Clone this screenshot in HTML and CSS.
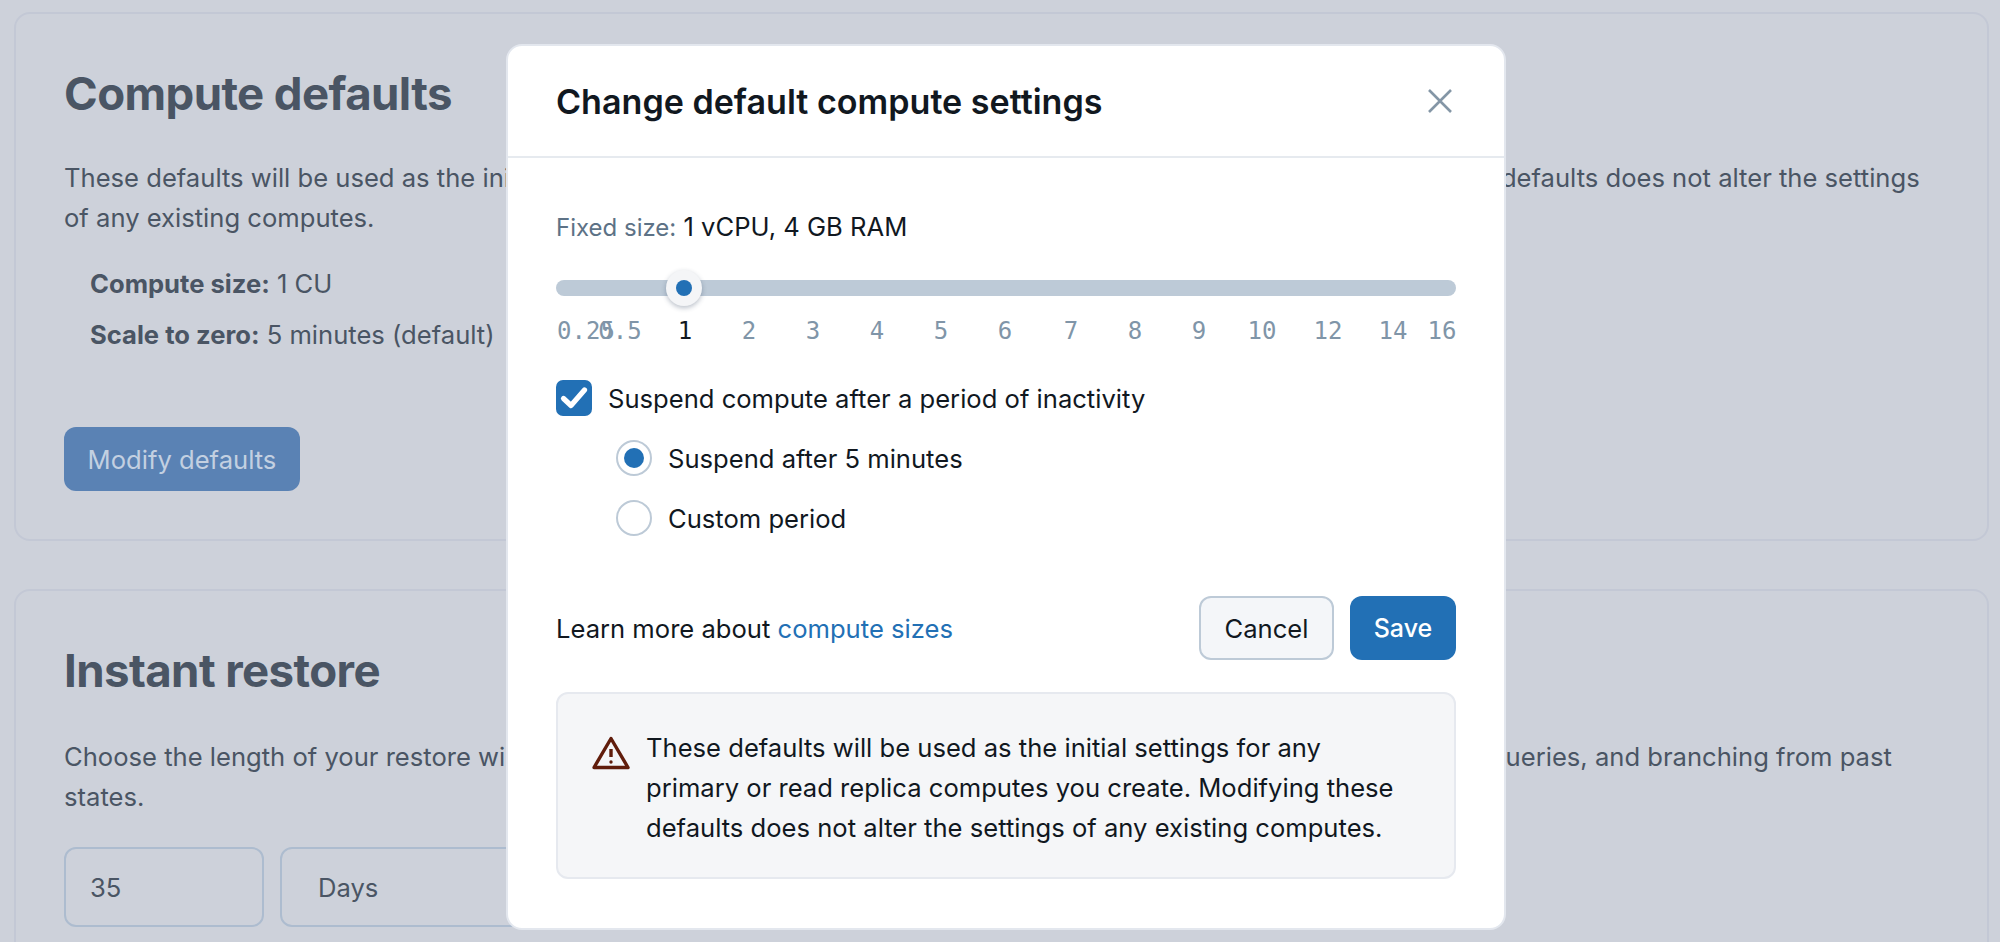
FILE: index.html
```html
<!DOCTYPE html>
<html lang="en">
<head>
<meta charset="utf-8">
<title>Compute defaults</title>
<link rel="stylesheet" href="styles.css">
</head>
<body>
<main class="page">
  <section class="card card-compute">
    <h2 class="card-title">Compute defaults</h2>
    <p class="card-text">These defaults will be used as the initial settings for any primary or read replica computes you create. Modifying these defaults does not alter the settings of any existing computes.</p>
    <ul class="summary">
      <li><strong>Compute size:</strong> 1 CU</li>
      <li><strong>Scale to zero:</strong> 5 minutes (default)</li>
    </ul>
    <button class="btn-modify" type="button">Modify defaults</button>
  </section>
  <section class="card card-restore">
    <h2 class="card-title">Instant restore</h2>
    <p class="card-text">Choose the length of your restore window. This setting applies to operations such as point-in-time restore, time travel queries, and branching from past states.</p>
    <div class="restore-fields">
      <div class="field field-num">35</div>
      <div class="field field-unit">Days</div>
    </div>
  </section>
</main>

<div class="overlay">
  <div class="modal" role="dialog">
    <header class="modal-head">
      <h1 class="modal-title">Change default compute settings</h1>
      <svg class="close" viewBox="0 0 24 24" width="24" height="24" fill="none" stroke="#8496a6" stroke-width="2.6"><path d="M1 1 L23 23 M23 1 L1 23"/></svg>
    </header>
    <div class="modal-body">
      <p class="fixed"><span class="fixed-label">Fixed size:</span> 1 vCPU, 4 GB RAM</p>
      <div class="slider">
        <div class="track"><span class="thumb"><span class="thumb-dot"></span></span></div>
        <div class="marks">
          <span class="mark" style="left:30px">0.25</span>
          <span class="mark" style="left:64px">0.5</span>
          <span class="mark mark-on" style="left:129px">1</span>
          <span class="mark" style="left:193px">2</span>
          <span class="mark" style="left:257px">3</span>
          <span class="mark" style="left:321px">4</span>
          <span class="mark" style="left:385px">5</span>
          <span class="mark" style="left:449px">6</span>
          <span class="mark" style="left:515px">7</span>
          <span class="mark" style="left:579px">8</span>
          <span class="mark" style="left:643px">9</span>
          <span class="mark" style="left:706px">10</span>
          <span class="mark" style="left:772px">12</span>
          <span class="mark" style="left:837px">14</span>
          <span class="mark" style="left:886px">16</span>
        </div>
      </div>
      <div class="check-row">
        <span class="checkbox"><svg viewBox="0 0 36 36" width="36" height="36" fill="none" stroke="#fff" stroke-width="5.2" stroke-linecap="round" stroke-linejoin="round"><path d="M7.5 18.5 L15 25.5 L28.5 10"/></svg></span>
        <span>Suspend compute after a period of inactivity</span>
      </div>
      <div class="radio-row"><span class="radio radio-on"></span><span>Suspend after 5 minutes</span></div>
      <div class="radio-row"><span class="radio"></span><span>Custom period</span></div>
      <div class="actions">
        <p class="learn">Learn more about <a class="link">compute sizes</a></p>
        <div class="buttons">
          <button class="btn-cancel" type="button">Cancel</button>
          <button class="btn-save" type="button">Save</button>
        </div>
      </div>
      <div class="notice">
        <svg class="warn" viewBox="0 0 38 34" width="38" height="34" fill="none" stroke="#611d0c" stroke-width="3.4" stroke-linejoin="round"><path d="M19 2.5 L36 31.5 H2 Z"/><path d="M19 13 V21"/><circle cx="19" cy="26" r="0.9" fill="#611d0c" stroke-width="1.6"/></svg>
        <p class="notice-text">These defaults will be used as the initial settings for any primary or read replica computes you create. Modifying these defaults does not alter the settings of any existing computes.</p>
      </div>
    </div>
  </div>
</div>
</body>
</html>
```

FILE: styles.css
```css
* { box-sizing: border-box; }
html, body { height: 100%; margin: 0; }
body {
  background: #cdd1da;
  font-family: Inter, "Noto Sans", sans-serif;
  font-size: 25.6px;
  color: #4a5564;
  overflow: hidden;
}
.page { padding: 12px 11px 0 14px; display: flex; flex-direction: column; gap: 48px; }
.card {
  border: 2px solid #c3c8d5;
  border-radius: 16px;
  padding: 48px;
}
.card-compute { height: 529px; }
.card-restore { height: 500px; }
.card-title { margin: 0; font-size: 45.6px; font-weight: 700; line-height: 64px; letter-spacing: -0.6px; color: #4a5564; }
.card-text { margin: 32px 0 0; line-height: 40px; }
.summary { list-style: none; margin: 20px 0 0; padding: 0 0 0 26px; line-height: 51px; }
.summary strong { font-weight: 700; }
.btn-modify {
  display: block;
  margin-top: 67px;
  width: 236px; height: 64px;
  border: 0; border-radius: 12px;
  background: #5a82b4;
  color: #c3d0e1;
  font: 400 25.6px Inter, sans-serif;
}
.card-restore .card-text { margin-top: 34px; }
.restore-fields { display: flex; gap: 16px; margin-top: 30px; }
.field {
  height: 80px;
  border: 2px solid #adbccf;
  border-radius: 12px;
  padding: 0 24px;
  display: flex; align-items: center;
}
.field-num { width: 200px; }
.field-unit { width: 400px; padding-left: 36px; }

.overlay {
  position: fixed; inset: 0;
  display: flex; justify-content: center; align-items: flex-start;
  padding: 44px 0 0 12px;
}
.modal {
  width: 1000px; height: 886px;
  background: #fff;
  border: 2px solid #e3e7ee;
  border-radius: 16px;
  color: #11181f;
}
.modal-head {
  height: 112px;
  border-bottom: 2px solid #e6eaef;
  padding: 0 52px 0 48px;
  display: flex; justify-content: space-between; align-items: center;
}
.modal-title { margin: 0; font-size: 34.1px; font-weight: 600; color: #11181f; }
.close { display: block; }
.modal-body { padding: 53px 48px 0; }
.fixed { margin: 0; line-height: 32px; }
.fixed-label { color: #5d7286; font-size: 24px; }
.slider { position: relative; margin-top: 36px; height: 68px; }
.track { position: relative; height: 16px; border-radius: 8px; background: #bdcad7; }
.thumb {
  position: absolute; left: 110px; top: -10px;
  width: 36px; height: 36px; border-radius: 50%;
  background: #f4f5f7;
  box-shadow: 0 2px 5px rgba(30,50,80,.3);
  display: flex; align-items: center; justify-content: center;
}
.thumb-dot { width: 16px; height: 16px; border-radius: 50%; background: #2270b5; }
.marks { position: relative; height: 30px; margin-top: 20px; }
.mark {
  position: absolute; top: 0;
  transform: translateX(-50%);
  font: 24px/30px "DejaVu Sans Mono", monospace;
  color: #8095a8;
}
.mark-on { color: #11181f; }
.check-row { display: flex; align-items: center; gap: 16px; margin-top: 32px; height: 36px; }
.checkbox {
  width: 36px; height: 36px; border-radius: 7px; background: #2270b5; display: block;
}
.checkbox svg { display: block; }
.radio-row { display: flex; align-items: center; gap: 16px; margin-top: 24px; height: 36px; padding-left: 60px; }
.radio-row .radio { flex: none; }
.radio {
  width: 36px; height: 36px; border-radius: 50%;
  border: 2px solid #bdcad7;
  background: #fff;
  display: flex; align-items: center; justify-content: center;
}
.radio-on::after { content: ""; width: 20px; height: 20px; border-radius: 50%; background: #2270b5; }
.actions { display: flex; justify-content: space-between; align-items: center; margin-top: 60px; height: 64px; }
.learn { margin: 0; }
.link { color: #2270b5; }
.buttons { display: flex; gap: 16px; }
.btn-cancel, .btn-save {
  height: 64px; border-radius: 12px;
  font: 400 25.6px Inter, sans-serif;
}
.btn-cancel { width: 135px; background: #f4f6f9; border: 2px solid #bdcad7; color: #11181f; }
.btn-save { width: 106px; background: #2270b5; border: 0; color: #fff; font-weight: 500; font-size: 25px; }
.notice {
  display: flex; gap: 16px;
  margin-top: 32px;
  height: 187px;
  background: #f5f6f8;
  border: 2px solid #e6e9ef;
  border-radius: 12px;
  padding: 34px 52px 0 34px;
}
.warn { flex: none; margin-top: 8px; }
.notice-text { margin: 0; line-height: 40px; }
```
